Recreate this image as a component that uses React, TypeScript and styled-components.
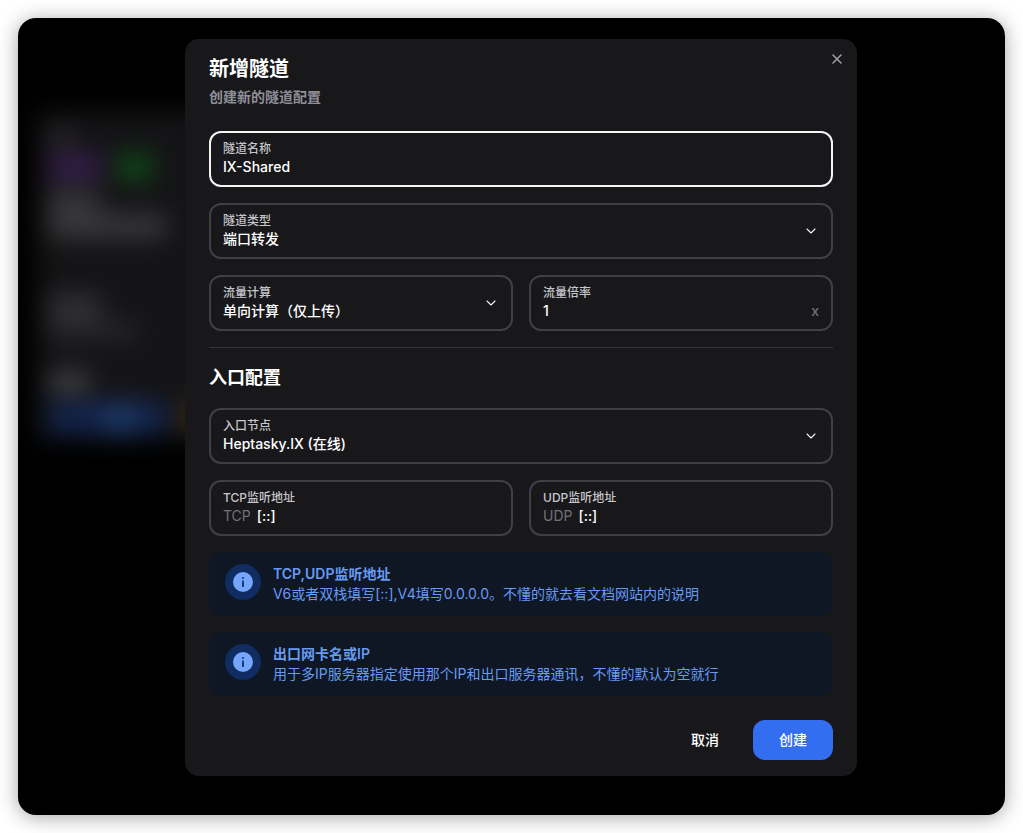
import React, { useId } from "react";
import styled, { createGlobalStyle } from "styled-components";

const GlobalStyle = createGlobalStyle`
  *, *::before, *::after { box-sizing: border-box; }
  body {
    margin: 0;
    background: #ffffff;
    color: #ffffff;
    font-family: Inter, "Noto Sans CJK SC", sans-serif;
    font-size: 14px;
    line-height: 20px;
    -webkit-font-smoothing: antialiased;
  }
  button, input, select { font: inherit; color: inherit; }
`;

const Page = styled.div`
  min-height: 100vh;
  padding: 18px;
  display: flex;
`;

const Screen = styled.main`
  position: relative;
  flex: 1;
  display: flex;
  justify-content: center;
  align-items: center;
  padding: 21px 0 39px 19px;
  background: #000000;
  border-radius: 18px;
  box-shadow: 0 2px 20px rgba(0, 0, 0, 0.36);
`;

/* Dimmed tunnel list behind the dialog */
const Backdrop = styled.div`
  position: absolute;
  inset: 0;
  padding: 94px 20px;
  overflow: hidden;
  border-radius: 18px;
`;

const TunnelCard = styled.div`
  display: flex;
  flex-direction: column;
  width: 270px;
  height: 326px;
  padding: 18px 10px 4px;
  gap: 10px;
  background: #141416;
  filter: blur(12px);
`;

const Row = styled.div<{ $gap: number }>`
  display: flex;
  gap: ${(p) => p.$gap}px;
`;

const Block = styled.div<{ $w: number; $h: number; $color: string }>`
  width: ${(p) => p.$w}px;
  height: ${(p) => p.$h}px;
  flex: none;
  background: ${(p) => p.$color};
`;

const Spacer = styled.div<{ $grow: number }>`
  flex: ${(p) => p.$grow};
`;

const Dialog = styled.section`
  position: relative;
  width: 100%;
  max-width: 672px;
  padding: 16px 24px;
  background: #18181b;
  border-radius: 14px;
`;

const CloseButton = styled.button`
  position: absolute;
  top: 4px;
  right: 4px;
  display: flex;
  padding: 8px;
  border: 0;
  border-radius: 50%;
  background: none;
  color: #a1a1aa;
  cursor: pointer;
`;

const Header = styled.header`
  display: flex;
  flex-direction: column;
  gap: 4px;
  margin-bottom: 24px;
`;

const Title = styled.h2`
  margin: 0;
  font-size: 20px;
  line-height: 28px;
  font-weight: 700;
`;

const Subtitle = styled.p`
  margin: 0;
  font-weight: 600;
  color: #8f8f98;
`;

const Form = styled.form`
  display: flex;
  flex-direction: column;
  gap: 16px;
`;

const Columns = styled.div`
  display: grid;
  grid-template-columns: 1fr 1fr;
  gap: 16px;
`;

const FieldBox = styled.div<{ $active?: boolean }>`
  display: flex;
  align-items: center;
  padding: 8px 12px;
  border: 2px solid ${(p) => (p.$active ? "#f4f4f5" : "#3f3f46")};
  border-radius: 12px;
`;

const FieldBody = styled.div`
  flex: 1;
  min-width: 0;
`;

const FieldLabel = styled.label`
  display: block;
  font-size: 12px;
  line-height: 16px;
  font-weight: 500;
  color: #c6c6cb;
`;

const ControlRow = styled.div`
  display: flex;
  gap: 6px;
`;

const Affix = styled.span<{ $strong?: boolean }>`
  color: #71717a;
  font-weight: ${(p) => (p.$strong ? 500 : 400)};
`;

const Input = styled.input`
  flex: 1;
  min-width: 0;
  height: 20px;
  padding: 0;
  border: 0;
  outline: 0;
  background: none;
  font-weight: 500;
`;

const Select = styled.select`
  display: block;
  width: 100%;
  height: 20px;
  padding: 0;
  border: 0;
  outline: 0;
  appearance: none;
  background: none;
  font-weight: 500;

  option { background: #18181b; }
`;

const Divider = styled.hr`
  width: 100%;
  height: 1px;
  margin: 0;
  border: 0;
  background: #343438;
`;

const SectionTitle = styled.h3`
  margin: 0;
  font-size: 18px;
  line-height: 28px;
  font-weight: 600;
`;

const Alert = styled.div`
  display: flex;
  gap: 12px;
  padding: 12px 16px;
  border-radius: 12px;
  background: #0f1624;
  color: #669bf3;
`;

const AlertIcon = styled.span`
  display: flex;
  flex: none;
  align-items: center;
  justify-content: center;
  width: 36px;
  height: 36px;
  border-radius: 50%;
  background: #102c60;
`;

const AlertTitle = styled.div`
  font-weight: 600;
`;

const AlertText = styled.div``;

const Footer = styled.footer`
  display: flex;
  justify-content: flex-end;
  gap: 8px;
  padding-top: 8px;
`;

const Button = styled.button<{ $primary?: boolean }>`
  min-width: 80px;
  height: 40px;
  padding: 0 16px;
  border: 0;
  border-radius: 12px;
  background: ${(p) => (p.$primary ? "#336ef0" : "transparent")};
  font-weight: 500;
  cursor: pointer;
`;

const Chevron = () => (
  <svg width="16" height="16" viewBox="0 0 24 24" fill="none" stroke="#f4f4f5" strokeWidth="1.6" strokeLinecap="round" strokeLinejoin="round" aria-hidden="true">
    <path d="m6 9 6 6 6-6" />
  </svg>
);

const InfoIcon = () => (
  <svg width="20" height="20" viewBox="0 0 20 20" aria-hidden="true">
    <circle cx="10" cy="10" r="10" fill="#74a6fb" />
    <rect x="9" y="8.5" width="2" height="6.5" rx="0.6" fill="#1b3f7c" />
    <circle cx="10" cy="6" r="1.1" fill="#1b3f7c" />
  </svg>
);

type TextFieldProps = {
  label: string;
  value: string;
  active?: boolean;
  prefix?: string;
  suffix?: string;
};

const TextField = ({ label, value, active, prefix, suffix }: TextFieldProps) => {
  const id = useId();
  return (
    <FieldBox $active={active}>
      <FieldBody>
        <FieldLabel htmlFor={id}>{label}</FieldLabel>
        <ControlRow>
          {prefix && <Affix>{prefix}</Affix>}
          <Input id={id} type="text" defaultValue={value} />
          {suffix && <Affix $strong>{suffix}</Affix>}
        </ControlRow>
      </FieldBody>
    </FieldBox>
  );
};

const SelectField = ({ label, value }: { label: string; value: string }) => {
  const id = useId();
  return (
    <FieldBox>
      <FieldBody>
        <FieldLabel htmlFor={id}>{label}</FieldLabel>
        <Select id={id} defaultValue={value}>
          <option>{value}</option>
        </Select>
      </FieldBody>
      <Chevron />
    </FieldBox>
  );
};

const Notice = ({ title, text }: { title: string; text: string }) => (
  <Alert role="note">
    <AlertIcon>
      <InfoIcon />
    </AlertIcon>
    <div>
      <AlertTitle>{title}</AlertTitle>
      <AlertText>{text}</AlertText>
    </div>
  </Alert>
);

export default function App() {
  return (
    <>
      <GlobalStyle />
      <Page>
        <Screen>
          <Backdrop aria-hidden="true">
            <TunnelCard>
              <Block $w={26} $h={14} $color="#2c2c30" />
              <Row $gap={16}>
                <Block $w={54} $h={26} $color="#351d4b" />
                <Block $w={34} $h={26} $color="#0f4a18" />
              </Row>
              <div>
                <Block $w={52} $h={24} $color="#353537" />
                <Block $w={118} $h={24} $color="#39393b" />
              </div>
              <Spacer $grow={3} />
              <div>
                <Block $w={54} $h={28} $color="#303033" />
                <Block $w={90} $h={18} $color="#262629" />
              </div>
              <Spacer $grow={1} />
              <Block $w={42} $h={20} $color="#424244" />
              <Row $gap={14}>
                <Row $gap={0}>
                  <Block $w={54} $h={32} $color="#12234c" />
                  <Block $w={36} $h={32} $color="#1b3768" />
                  <Block $w={30} $h={32} $color="#12234c" />
                </Row>
                <Block $w={90} $h={32} $color="#3a270a" />
              </Row>
            </TunnelCard>
          </Backdrop>
          <Dialog role="dialog" aria-labelledby="dialog-title">
            <CloseButton type="button" aria-label="关闭">
              <svg width="16" height="16" viewBox="0 0 24 24" fill="none" stroke="currentColor" strokeWidth="2.2" strokeLinecap="round" aria-hidden="true">
                <path d="M18 6 6 18M6 6l12 12" />
              </svg>
            </CloseButton>
            <Header>
              <Title id="dialog-title">新增隧道</Title>
              <Subtitle>创建新的隧道配置</Subtitle>
            </Header>
            <Form onSubmit={(e: React.FormEvent) => e.preventDefault()}>
              <TextField label="隧道名称" value="IX-Shared" active />
              <SelectField label="隧道类型" value="端口转发" />
              <Columns>
                <SelectField label="流量计算" value="单向计算（仅上传）" />
                <TextField label="流量倍率" value="1" suffix="x" />
              </Columns>
              <Divider />
              <SectionTitle>入口配置</SectionTitle>
              <SelectField label="入口节点" value="Heptasky.IX (在线)" />
              <Columns>
                <TextField label="TCP监听地址" value="[::]" prefix="TCP" />
                <TextField label="UDP监听地址" value="[::]" prefix="UDP" />
              </Columns>
              <Notice title="TCP,UDP监听地址" text="V6或者双栈填写[::],V4填写0.0.0.0。不懂的就去看文档网站内的说明" />
              <Notice title="出口网卡名或IP" text="用于多IP服务器指定使用那个IP和出口服务器通讯，不懂的默认为空就行" />
              <Footer>
                <Button type="button">取消</Button>
                <Button type="submit" $primary>创建</Button>
              </Footer>
            </Form>
          </Dialog>
        </Screen>
      </Page>
    </>
  );
}
